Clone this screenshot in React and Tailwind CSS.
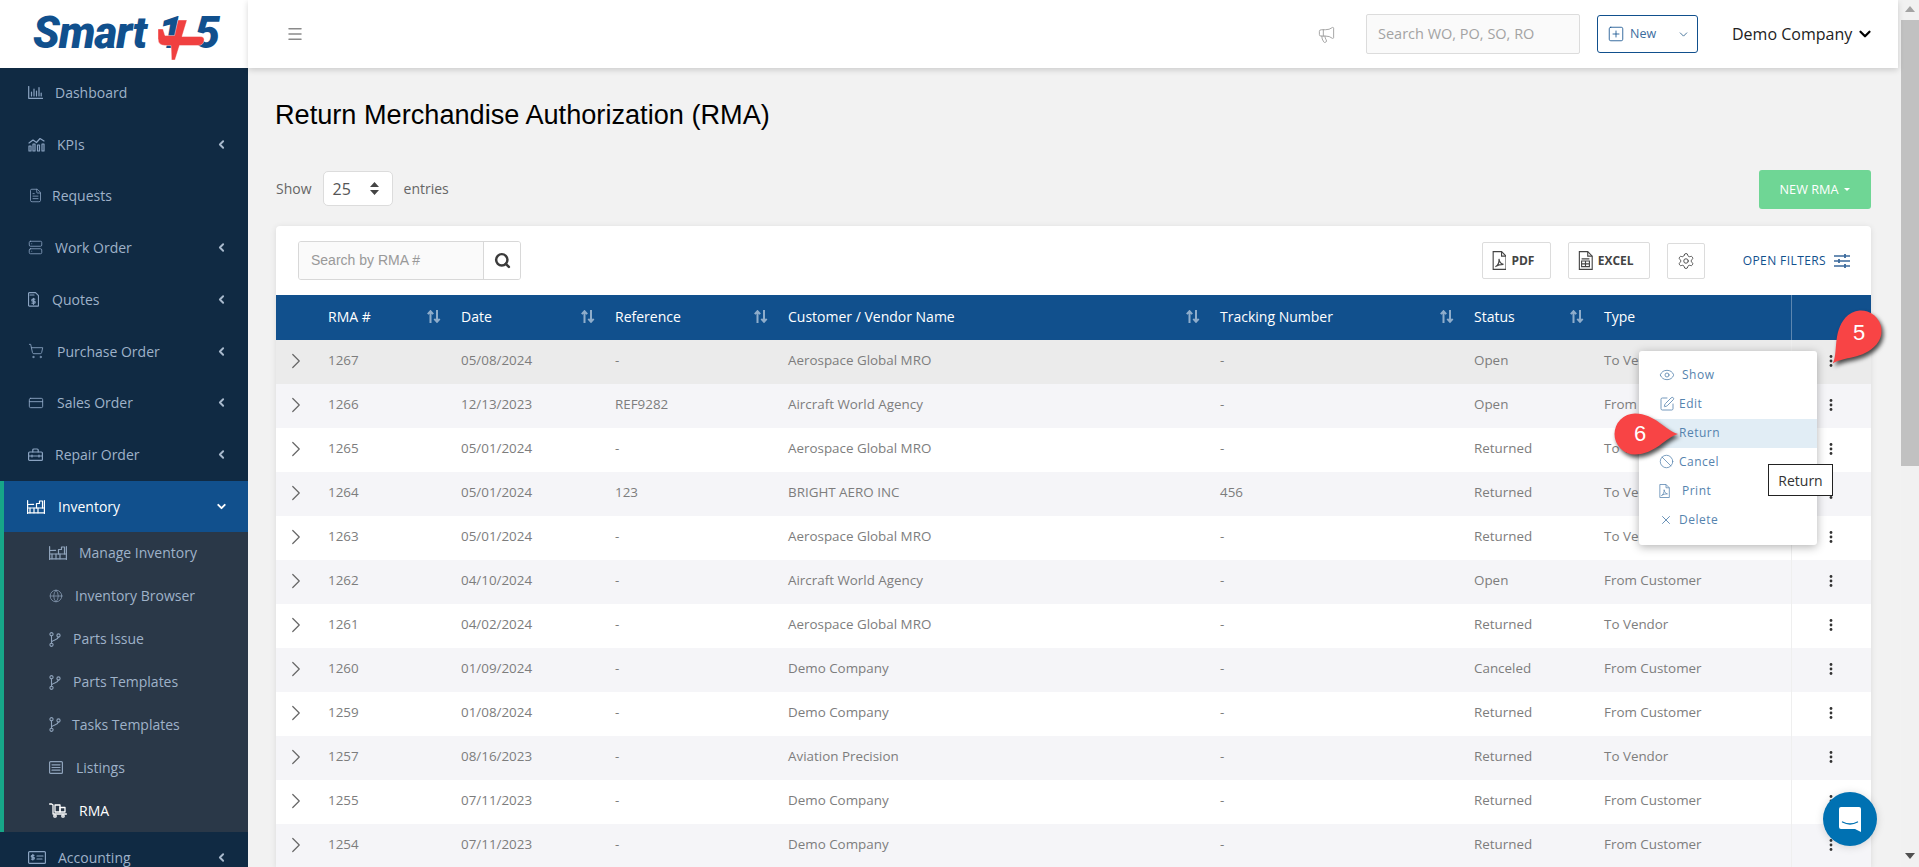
import React from "react";
import { ChevronLeft, ChevronDown, ChevronRight, Menu, Megaphone, Settings, Globe, FileText, Server, ShoppingCart, CreditCard, Eye, SquarePen, Ban, X, Search, SquarePlus } from "lucide-react";

const s = { fill: "none", stroke: "currentColor", strokeWidth: 1.2, strokeLinecap: "round", strokeLinejoin: "round" };

const DashIcon = () => (
  <svg width="15" height="13" viewBox="0 0 15 13" {...s}><path d="M.7.5v11.8h13.8" /><path d="M3.5 10V6M6 10V3M8.5 10V5M11 10V1.5M13.2 10V7" /></svg>
);
const KpiIcon = () => (
  <svg width="17" height="16" viewBox="0 0 17 16" {...s}><path d="M1 7l4-3 3.5 2.5L12 2.5l4 2.5" /><rect x="1" y="10" width="2" height="5" /><rect x="5" y="8" width="2" height="7" /><rect x="9.5" y="9" width="2" height="6" /><rect x="14" y="8" width="2" height="7" /></svg>
);
const QuoteIcon = () => (
  <svg width="11" height="15" viewBox="0 0 11 15" {...s}><path d="M1.5.6h6l3 3v9.6a1 1 0 01-1 1h-8a1 1 0 01-1-1V1.6a1 1 0 011-1z" /><path d="M2 3h4" /><path d="M6.8 7.2H4.8a.9.9 0 000 2h1.4a.9.9 0 010 2H4M5.5 6.3v6" /></svg>
);
const RepairIcon = () => (
  <svg width="15" height="13" viewBox="0 0 15 13" {...s}><rect x=".6" y="4" width="13.8" height="8.4" rx="1" /><path d="M4.8 4V2a1 1 0 011-1h3.4a1 1 0 011 1v2M.6 8h13.8M4 7v2M11 7v2" /></svg>
);
const WareIcon = ({ w = 18, h = 14 }) => (
  <svg width={w} height={h} viewBox="0 0 18 14" {...s}><path d="M.6.6v12.8M17.4.6v12.8M.6 12.8h16.8M.6 4.5l6-.2M.6 8h16.8" /><path d="M3 12.8V8M7 12.8V8M11 12.8V8M9.5 8V3.5h3V1h3v7" /></svg>
);
const ListIcon = () => (
  <svg width="14" height="13" viewBox="0 0 14 13" {...s}><rect x=".6" y=".6" width="12.8" height="11.8" rx="1" /><path d="M3 3.8h8M3 6.5h8M3 9.2h8" /></svg>
);
const RmaIcon = () => (
  <svg width="18" height="15" viewBox="0 0 18 15" {...s} strokeWidth="1.3"><path d="M.6 1h2l1.4 1v9h13.4" /><rect x="6" y="2" width="5" height="7" /><rect x="11" y="4.5" width="5" height="4.5" /><circle cx="6" cy="13" r="1.2" /><circle cx="14" cy="13" r="1.2" /></svg>
);
const AcctIcon = () => (
  <svg width="18" height="13" viewBox="0 0 18 13" {...s}><rect x=".6" y=".6" width="16.8" height="11.8" rx="1" /><path d="M9 5h6M9 8h5" /><path d="M6 4.3H4.2a.9.9 0 000 1.9h1.2a.9.9 0 010 1.9H3.4M4.8 3.4v5.6" /></svg>
);
const BranchIcon = () => (
  <svg width="12" height="15" viewBox="0 0 12 15" {...s} strokeWidth="1.1"><circle cx="2.5" cy="2.2" r="1.6" /><circle cx="2.5" cy="12.8" r="1.6" /><circle cx="9.5" cy="3.5" r="1.6" /><path d="M2.5 3.8v7.4M9.3 5.1c-.2 2.5-4 2.6-6.8 4.6" /></svg>
);

const mainNav = [
  { label: "Dashboard", icon: <DashIcon />, ml: "ml-[55px]", x: false },
  { label: "KPIs", icon: <KpiIcon />, ml: "ml-[57px]", x: true },
  { label: "Requests", icon: <FileText size={15} strokeWidth={1.3} />, ml: "ml-[52px]", x: false },
  { label: "Work Order", icon: <Server size={15} strokeWidth={1.3} />, ml: "ml-[55px]", x: true },
  { label: "Quotes", icon: <QuoteIcon />, ml: "ml-[52px]", x: true },
  { label: "Purchase Order", icon: <ShoppingCart size={16} strokeWidth={1.3} />, ml: "ml-[57px]", x: true },
  { label: "Sales Order", icon: <CreditCard size={16} strokeWidth={1.4} />, ml: "ml-[57px]", x: true },
  { label: "Repair Order", icon: <RepairIcon />, ml: "ml-[55px]", x: true },
];

const subNav = [
  { label: "Manage Inventory", icon: <WareIcon />, ml: "ml-[75px]" },
  { label: "Inventory Browser", icon: <Globe size={14} strokeWidth={1.2} />, ml: "ml-[71px]" },
  { label: "Parts Issue", icon: <BranchIcon />, ml: "ml-[69px]" },
  { label: "Parts Templates", icon: <BranchIcon />, ml: "ml-[69px]" },
  { label: "Tasks Templates", icon: <BranchIcon />, ml: "ml-[68px]" },
  { label: "Listings", icon: <ListIcon />, ml: "ml-[72px]" },
  { label: "RMA", icon: <RmaIcon />, ml: "ml-[75px]", active: true },
];

const rows = [
  ["1267", "05/08/2024", "-", "Aerospace Global MRO", "-", "Open", "To Vendor"],
  ["1266", "12/13/2023", "REF9282", "Aircraft World Agency", "-", "Open", "From Customer"],
  ["1265", "05/01/2024", "-", "Aerospace Global MRO", "-", "Returned", "To Vendor"],
  ["1264", "05/01/2024", "123", "BRIGHT AERO INC", "456", "Returned", "To Vendor"],
  ["1263", "05/01/2024", "-", "Aerospace Global MRO", "-", "Returned", "To Vendor"],
  ["1262", "04/10/2024", "-", "Aircraft World Agency", "-", "Open", "From Customer"],
  ["1261", "04/02/2024", "-", "Aerospace Global MRO", "-", "Returned", "To Vendor"],
  ["1260", "01/09/2024", "-", "Demo Company", "-", "Canceled", "From Customer"],
  ["1259", "01/08/2024", "-", "Demo Company", "-", "Returned", "From Customer"],
  ["1257", "08/16/2023", "-", "Aviation Precision", "-", "Returned", "To Vendor"],
  ["1255", "07/11/2023", "-", "Demo Company", "-", "Returned", "From Customer"],
  ["1254", "07/11/2023", "-", "Demo Company", "-", "Returned", "From Customer"],
];

const Sort = () => (
  <svg width="14" height="13" viewBox="0 0 14 13" fill="none" stroke="#8fadcb" strokeWidth="2" className="shrink-0">
    <path d="M3.5 13V1.5M.8 4.2l2.7-3 2.7 3" />
    <path d="M10 0v11.5M7.3 8.8l2.7 3 2.7-3" />
  </svg>
);

const Dots = () => (
  <svg width="4" height="12" viewBox="0 0 4 12" fill="#333" className="mx-auto"><circle cx="2" cy="1.5" r="1.4" /><circle cx="2" cy="6" r="1.4" /><circle cx="2" cy="10.5" r="1.4" /></svg>
);

const PdfIcon = ({ size = 19, cls = "" }) => (
  <svg width={size * 0.77} height={size} viewBox="0 0 13 17" fill="none" stroke="currentColor" strokeWidth="1" className={cls}><path d="M1 .6h7.5l4 4v11.8H1z" /><path d="M8.5.6v4h4" /><path d="M3 14c2-1 3.5-4 3.2-7 .4 3 1.8 4.5 4 5-2.5 0-5 .5-7.2 2z" /></svg>
);
const XlsIcon = () => (
  <svg width="15" height="19" viewBox="0 0 13 17" fill="none" stroke="currentColor" strokeWidth="1"><path d="M1 .6h7.5l4 4v11.8H1z" /><path d="M8.5.6v4h4" /><path d="M3 7h7M3 9h7v5H3zM6.5 9v5M3 11.500h7" /></svg>
);

const Drop = ({ angle, className, num, numCls }) => (
  <div className={"absolute z-30 w-[100px] h-[100px] " + className}>
    <svg width="100" height="100" viewBox="-50 -50 100 100" className="drop-shadow-[2px_3px_2px_rgba(0,0,0,0.7)]">
      <path transform={`rotate(${angle})`} d="M43 0C31-3 20-20.5 0-20.5A20.5 20.5 0 1 0 0 20.5C20 20.5 31 3 43 0Z" fill="#f84445" />
    </svg>
    <span className={"absolute text-white text-[22px] leading-none font-['Liberation_Sans',sans-serif] " + numCls}>{num}</span>
  </div>
);

const MenuRow = ({ icon, label, ml, hl }) => (
  <div className={"relative h-[29px] flex items-center " + (hl ? "bg-[#e1edf5]" : "")}>
    <span className="absolute left-[20px] top-[-1px] h-full flex items-center text-[#5f8ab3]">{icon}</span>
    <span className={"mt-[-2px] text-[12px] tracking-[0.5px] text-[#5583ae] " + ml}>{label}</span>
  </div>
);

export default function App() {
  return (
    <div className="w-[1919px] h-[867px] overflow-hidden relative flex bg-[#f2f2f2] font-['Open_Sans',sans-serif]">
      {/* Sidebar */}
      <aside className="w-[248px] shrink-0 bg-[#102a43] flex flex-col">
        <div className="h-[68px] bg-white relative z-10 shrink-0 overflow-hidden">
          <div className="flex items-baseline pl-[33px] pt-[8px] text-[#11508d] font-['Roboto',sans-serif] font-black italic text-[44px] leading-[50px] tracking-[-1px]">
            <span>Smart</span>
            <span className="ml-[12px] text-[44px]">1</span>
            <span className="ml-[13px] text-[45px]">5</span>
          </div>
          <svg className="absolute left-0 top-0" width="248" height="68" viewBox="0 0 248 68">
            <path d="M178 20h9l-5 16.5h18q5 0 4 4.5t-6 4.5h-18.500L175 60h-3.500l-.5-14.500h-6q-7 0-7-7V29h5l2 6.500h9.500z" fill="#f04040" stroke="#fff" strokeWidth="0.4" />
          </svg>
        </div>
        <nav className="text-[14px] text-[#9fb2c9] mt-[-1.5px]">
          {mainNav.map((n) => (
            <div key={n.label} className="h-[51.75px] relative flex items-center">
              <span className="absolute left-[28px] top-0 h-full flex items-center text-[#8aa3c1]">{n.icon}</span>
              <span className={n.ml}>{n.label}</span>
              {n.x && <ChevronLeft size={13} strokeWidth={3.5} className="absolute left-[215px] text-[#a9bacd]" />}
            </div>
          ))}
          <div className="h-[51px] mt-[0.5px] relative flex items-center bg-[#11508d] border-l-[4px] border-[#17a688] text-white font-medium">
            <span className="absolute left-[23px] top-0 h-full flex items-center"><WareIcon /></span>
            <span className="ml-[54px]">Inventory</span>
            <ChevronDown size={13} strokeWidth={3.5} className="absolute left-[211px]" />
          </div>
          <div className="h-[300px] bg-[#2a3848] border-l-[4px] border-[#17a688] flex flex-col">
            {subNav.map((n) => (
              <div key={n.label} className={"h-[42.86px] relative flex items-center pb-[1px] " + (n.active ? "text-white font-medium" : "")}>
                <span className={"absolute left-[45px] top-0 h-full flex items-center " + (n.active ? "text-white" : "text-[#8fa3bb]")}>{n.icon}</span>
                <span className={n.ml}>{n.label}</span>
              </div>
            ))}
          </div>
          <div className="h-[51.75px] relative flex items-center pb-[1px]">
            <span className="absolute left-[28px] top-0 h-full flex items-center text-[#8aa3c1]"><AcctIcon /></span>
            <span className="ml-[58px]">Accounting</span>
            <ChevronLeft size={13} strokeWidth={3.5} className="absolute left-[215px] text-[#a9bacd]" />
          </div>
        </nav>
      </aside>

      {/* Main */}
      <div className="w-[1653px] shrink-0 flex flex-col">
        <header className="h-[68px] shrink-0 mr-[3px] bg-white shadow-[0_2px_6px_rgba(0,0,0,0.16)] relative z-10 flex items-center pl-[38px]">
          <Menu size={18} strokeWidth={2} className="text-[#8a8a8a]" />
          <Megaphone size={19} strokeWidth={1.1} className="ml-auto text-[#9a9a9a]" />
          <div className="ml-[30px] w-[214px] h-[40px] bg-[#fafafa] border border-[#dcdcdc] rounded-[2px] flex items-center pl-[11px] text-[14.5px] text-[#a3a3a3]">Search WO, PO, SO, RO</div>
          <div className="ml-[17px] w-[101px] h-[38px] border border-[#11508d] rounded-[3px] flex items-center pl-[9px]">
            <SquarePlus size={18} strokeWidth={1.1} className="text-[#11508d]" />
            <span className="ml-[5px] text-[12.5px] text-[#3c6c9e]">New</span>
            <ChevronDown size={13} strokeWidth={1.6} className="ml-[21px] text-[#2f628f]" />
          </div>
          <div className="ml-[34px] w-[119px] whitespace-nowrap text-[16px] text-[#222]">Demo Company</div>
          <ChevronDown size={18} strokeWidth={3} className="ml-[5px] mr-[24px] text-black" />
        </header>

        <main className="flex-1 pl-[28px] pr-[30px]">
          <h1 className="h-[102px] ml-[-1px] flex items-center pb-[8px] text-[27.15px] text-black font-['Liberation_Sans',sans-serif]">Return Merchandise Authorization (RMA)</h1>
          <div className="h-[39px] flex items-center text-[14px] text-[#666]">
            <div className="flex items-center mt-[-2px]">
              <span>Show</span>
              <div className="ml-[11px] w-[70px] h-[35px] bg-white border border-[#dcdcdc] rounded-[5px] flex items-center justify-between pl-[9px] pr-[13px] text-[16px] text-[#555]">
                <span>25</span>
                <svg width="9" height="13" viewBox="0 0 9 13" fill="#444"><path d="M4.5 0L9 5H0zM4.5 13L0 8h9z" /></svg>
              </div>
              <span className="ml-[11px]">entries</span>
            </div>
            <div className="ml-auto w-[112px] h-[39px] bg-[#6fd695] rounded-[3px] flex items-center justify-center text-[12.7px] text-white">
              NEW RMA
              <svg width="6" height="3" viewBox="0 0 6 3" fill="#fff" className="ml-[6px]"><path d="M0 0h6L3 3z" /></svg>
            </div>
          </div>

          <section className="mt-[17px] bg-white rounded-t-[4px] shadow-[0_1px_6px_rgba(0,0,0,0.1)]">
            <div className="h-[69px] flex items-center pl-[22px] pr-[21px]">
              <div className="w-[223px] h-[39px] border border-[#d8d8d8] rounded-[3px] flex overflow-hidden">
                <div className="w-[184px] bg-[#fafafa] flex items-center pl-[12px] text-[14px] text-[#999] font-['Liberation_Sans',sans-serif]">Search by RMA #</div>
                <div className="flex-1 bg-white border-l border-[#d8d8d8] flex items-center justify-center text-[#3b3b3b]"><Search size={17} strokeWidth={3.5} /></div>
              </div>
              <div className="ml-auto w-[69px] h-[37px] border border-[#dcdcdc] rounded-[2px] flex items-center pl-[9px] gap-[5px] text-[12px] font-bold text-[#444]">
                <PdfIcon /><span>PDF</span>
              </div>
              <div className="ml-[17px] w-[82px] h-[37px] border border-[#dcdcdc] rounded-[2px] flex items-center pl-[9px] gap-[5px] text-[12px] font-bold text-[#444]">
                <XlsIcon /><span>EXCEL</span>
              </div>
              <div className="ml-[17px] w-[38px] h-[36px] border border-[#dcdcdc] rounded-[2px] flex items-center justify-center text-[#444]">
                <Settings size={18} strokeWidth={1.2} />
              </div>
              <span className="ml-[38px] text-[12px] tracking-[0.4px] text-[#11508d] whitespace-nowrap">OPEN FILTERS</span>
              <svg width="16" height="14" viewBox="0 0 16 14" stroke="#3b6a9c" strokeWidth="1.6" className="ml-[8px]"><path d="M0 2h16M0 7h16M0 12h16" /><path d="M11 0v4M5 5v4M11 10v4" strokeWidth="1.8" /></svg>
            </div>

            <table className="w-[1595px] table-fixed text-[13.4px] text-[#7d7d7d]">
              <colgroup>
                <col className="w-[52px]" /><col className="w-[133px]" /><col className="w-[154px]" /><col className="w-[173px]" /><col className="w-[432px]" /><col className="w-[254px]" /><col className="w-[130px]" /><col className="w-[187px]" /><col className="w-[80px]" />
              </colgroup>
              <thead>
                <tr className="h-[45px] bg-[#11508d] text-white text-[14px] font-medium text-left">
                  <th />
                  {["RMA #", "Date", "Reference", "Customer / Vendor Name", "Tracking Number", "Status"].map((h) => (
                    <th key={h} className="font-medium pr-[20px] pb-[3px]">
                      <div className="flex items-center justify-between"><span>{h}</span><Sort /></div>
                    </th>
                  ))}
                  <th className="font-medium pb-[3px]">Type</th>
                  <th className="border-l border-[#5c86b0]" />
                </tr>
              </thead>
              <tbody>
                {rows.map((r, i) => (
                  <tr key={r[0]} className={"h-[44px] " + (i === 0 ? "bg-[#ebebeb]" : i % 2 === 1 ? "bg-[#f5f5f8]" : "bg-white")}>
                    <td className="pb-[2px]"><ChevronRight size={26} strokeWidth={1.1} className="ml-[7px] text-[#666]" /></td>
                    {r.map((c, j) => (<td key={j} className="whitespace-nowrap pb-[3px]">{c}</td>))}
                    <td className="border-l border-[#efefef] pb-[3px]"><Dots /></td>
                  </tr>
                ))}
              </tbody>
            </table>
          </section>
        </main>
      </div>

      {/* Fake window scrollbar */}
      <div className="w-[18px] shrink-0 bg-[#f1f1f1] flex flex-col items-center">
        <svg width="10" height="20" viewBox="0 0 10 20" fill="#a3a3a3"><path d="M5 6l5 6H0z" /></svg>
        <div className="w-full h-[446px] bg-[#c1c1c1]" />
        <svg width="10" height="6" viewBox="0 0 10 6" fill="#505050" className="mt-auto mb-[8px]"><path d="M0 0h10L5 6z" /></svg>
      </div>

      {/* Row action menu */}
      <div className="absolute z-20 left-[1639px] top-[351px] w-[178px] h-[194px] py-[10px] bg-white rounded-[3px] shadow-[0_2px_10px_rgba(0,0,0,0.3)]">
        <MenuRow icon={<Eye size={16} strokeWidth={1.3} />} label="Show" ml="ml-[43px]" />
        <MenuRow icon={<SquarePen size={16} strokeWidth={1.3} />} label="Edit" ml="ml-[40px]" />
        <MenuRow label="Return" ml="ml-[40px]" hl />
        <MenuRow icon={<Ban size={15} strokeWidth={1.3} />} label="Cancel" ml="ml-[40px]" />
        <MenuRow icon={<PdfIcon size={14} />} label="Print" ml="ml-[43px]" />
        <MenuRow icon={<X size={14} strokeWidth={1.6} />} label="Delete" ml="ml-[40px]" />
      </div>

      {/* Browser tooltip */}
      <div className="absolute z-30 left-[1768px] top-[464px] w-[65px] h-[32px] bg-white border border-[#222] flex items-center justify-center text-[14px] text-[#333]">Return</div>

      {/* Callouts */}
      <Drop angle={131} className="left-[1811px] top-[281px]" num="5" numCls="left-[42px] top-[41px]" />
      <Drop angle={0} className="left-[1585px] top-[384px]" num="6" numCls="left-[49px] top-[39px]" />

      {/* Chat launcher */}
      <div className="absolute z-30 left-[1823px] top-[792px] w-[54px] h-[54px] rounded-full bg-[#0071b2] flex items-center justify-center shadow-[0_1px_8px_rgba(0,0,0,0.15)]">
        <svg width="24" height="27" viewBox="0 0 24 27">
          <path d="M3 1h18a2 2 0 012 2v23l-6-3H3a2 2 0 01-2-2V3a2 2 0 012-2z" fill="#fff" />
          <path d="M4.5 16q7.5 4 15 0" fill="none" stroke="#0071b2" strokeWidth="1.4" strokeLinecap="round" />
        </svg>
      </div>
    </div>
  );
}
